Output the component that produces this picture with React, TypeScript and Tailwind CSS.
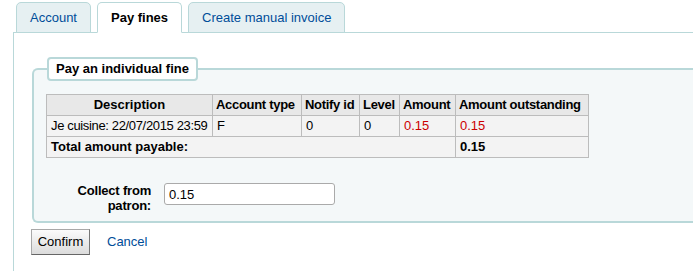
import React from 'react';

interface Fine {
  description: string;
  accountType: string;
  notifyId: string;
  level: string;
  amount: string;
  outstanding: string;
}

const fines: Fine[] = [
  {
    description: 'Je cuisine: 22/07/2015 23:59',
    accountType: 'F',
    notifyId: '0',
    level: '0',
    amount: '0.15',
    outstanding: '0.15',
  },
];

const tabs = [
  { label: 'Account', active: false },
  { label: 'Pay fines', active: true },
  { label: 'Create manual invoice', active: false },
];

const App: React.FC = () => {
  return (
    <div className="h-screen bg-white pl-[13px] pt-[2px] text-[13px] text-black overflow-hidden [font-family:'Liberation_Sans',Arial,sans-serif]">
      {/* Tabs */}
      <div className="flex gap-[6px] pl-[3px]">
        {tabs.map((tab) => (
          <div
            key={tab.label}
            className={`relative -mb-px flex h-[31px] items-center rounded-t-[5px] border border-[#b9d8d9] px-[13px] leading-[15px] ${
              tab.active
                ? 'z-10 border-b-white bg-white font-bold text-black'
                : 'bg-[#e6f0f2] text-[#004d99]'
            }`}
          >
            {tab.label}
          </div>
        ))}
      </div>

      {/* Tab panel */}
      <div className="h-full border-l border-t border-[#b9d8d9] pl-[18px] pt-[24px]">
        <fieldset className="rounded-l-[6px] border-2 border-r-0 border-[#b9d8d9] bg-[#f4f8f9] pb-[8px] pl-[12px] pt-[13px]">
          <legend className="ml-[1px] rounded-[4px] border-2 border-[#b9d8d9] bg-white px-[7px] text-[13px] font-bold leading-[20px]">
            Pay an individual fine
          </legend>

          <table className="w-[542px] table-fixed border-collapse border border-[#bcbcbc] leading-[16px]">
            <colgroup>
              <col className="w-[166px]" />
              <col className="w-[89px]" />
              <col className="w-[58px]" />
              <col className="w-[40px]" />
              <col className="w-[56px]" />
              <col className="w-[133px]" />
            </colgroup>
            <thead>
              <tr className="bg-[#e8e8e8] font-bold">
                <th className="border border-[#bcbcbc] px-[4px] py-[2px] text-center">Description</th>
                <th className="border border-[#bcbcbc] px-[3px] py-[2px] text-left whitespace-nowrap tracking-[-0.3px]">Account type</th>
                <th className="border border-[#bcbcbc] px-[3px] py-[2px] text-left whitespace-nowrap tracking-[-0.3px]">Notify id</th>
                <th className="border border-[#bcbcbc] px-[3px] py-[2px] text-left tracking-[-0.3px]">Level</th>
                <th className="border border-[#bcbcbc] px-[3px] py-[2px] text-left tracking-[-0.3px]">Amount</th>
                <th className="border border-[#bcbcbc] px-[3px] py-[2px] text-left whitespace-nowrap tracking-[-0.3px]">Amount outstanding</th>
              </tr>
            </thead>
            <tbody>
              {fines.map((fine, index) => (
                <tr key={index} className="bg-[#f3f3f3]">
                  <td className="border border-[#bcbcbc] px-[4px] py-[2px] whitespace-nowrap tracking-[-0.35px]">{fine.description}</td>
                  <td className="border border-[#bcbcbc] px-[4px] py-[2px]">{fine.accountType}</td>
                  <td className="border border-[#bcbcbc] px-[4px] py-[2px]">{fine.notifyId}</td>
                  <td className="border border-[#bcbcbc] px-[4px] py-[2px]">{fine.level}</td>
                  <td className="border border-[#bcbcbc] px-[4px] py-[2px] text-[#cc0000]">{fine.amount}</td>
                  <td className="border border-[#bcbcbc] px-[4px] py-[2px] text-[#cc0000]">{fine.outstanding}</td>
                </tr>
              ))}
              <tr className="bg-[#f3f3f3] font-bold">
                <td colSpan={5} className="border border-[#bcbcbc] px-[4px] py-[2px]">Total amount payable:</td>
                <td className="border border-[#bcbcbc] px-[4px] py-[2px]">0.15</td>
              </tr>
            </tbody>
          </table>

          <div className="mt-[25px] flex items-start gap-[13px]">
            <label className="w-[105px] text-right font-bold leading-[15px] tracking-[-0.2px]">
              Collect from
              <br />
              patron:
            </label>
            <input
              type="text"
              defaultValue="0.15"
              className="h-[22px] w-[171px] rounded-[3px] border border-[#aaaaaa] bg-white px-[4px] text-[13px] outline-none"
            />
          </div>
        </fieldset>

        <div className="mt-[6px] flex items-center -ml-[1px]">
          <button className="h-[26px] w-[59px] border border-[#a8a8a8] border-b-[#666] border-r-[#777] bg-gradient-to-b from-[#fbfbfb] to-[#dcdcdc] text-[13px] text-black">
            Confirm
          </button>
          <a href="#" className="ml-[17px] text-[#004d99]">
            Cancel
          </a>
        </div>
      </div>
    </div>
  );
};

export default App;
